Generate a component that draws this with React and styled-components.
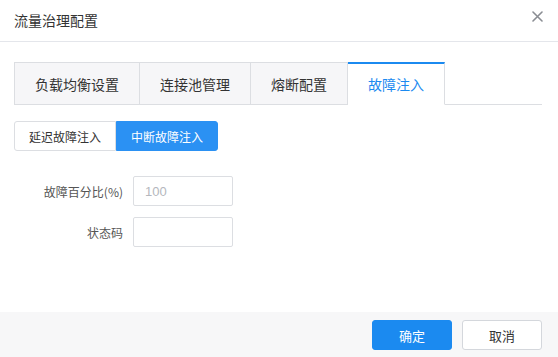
import React, { useState } from "react";
import styled, { createGlobalStyle } from "styled-components";

const GlobalStyle = createGlobalStyle`
  html, body {
    margin: 0;
    padding: 0;
    background: #fff;
  }
  body {
    font-family: "Noto Sans CJK SC", "Noto Sans", "Liberation Sans", sans-serif;
    color: #333;
  }
  * { box-sizing: border-box; }
`;

const Dialog = styled.div`
  width: 558px;
  height: 357px;
  display: flex;
  flex-direction: column;
  background: #fff;
`;

const Header = styled.div`
  height: 42px;
  display: flex;
  align-items: center;
  justify-content: space-between;
  padding: 0 14px 0 14px;
  border-bottom: 1px solid #e4e6eb;
`;

const Title = styled.div`
  font-size: 14px;
  color: #333;
  line-height: 20px;
  margin-top: -2px;
`;

const Close = styled.button`
  width: 14px;
  height: 14px;
  padding: 0;
  margin-top: -8px;
  border: none;
  background: none;
  display: flex;
  align-items: center;
  justify-content: center;
  cursor: pointer;
`;

const Body = styled.div`
  flex: 1;
  padding: 20px 16px 0 14px;
`;

const TabBar = styled.div`
  display: flex;
  border-bottom: 1px solid #dcdee2;
`;

const Tab = styled.div`
  height: 43px;
  padding: 0 20px;
  display: flex;
  align-items: center;
  font-size: 14px;
  cursor: pointer;
  margin-bottom: -1px;
  color: ${(p) => (p.$active ? "#1b8af0" : "#333")};
  background: ${(p) => (p.$active ? "#fff" : "#f6f6f8")};
  border: 1px solid #dcdee2;
  border-left: ${(p) => (p.$first ? "1px solid #dcdee2" : "none")};
  border-top: ${(p) => (p.$active ? "2px solid #1b8af0" : "1px solid #dcdee2")};
  border-bottom: ${(p) => (p.$active ? "1px solid #fff" : "1px solid #dcdee2")};
`;

const Segments = styled.div`
  display: flex;
  margin-top: 16px;
`;

const Segment = styled.button`
  height: 30px;
  width: 102px;
  padding: 0;
  font-family: inherit;
  font-size: 12px;
  cursor: pointer;
  border-radius: ${(p) => (p.$first ? "3px 0 0 3px" : "0 3px 3px 0")};
  color: ${(p) => (p.$active ? "#fff" : "#333")};
  background: ${(p) => (p.$active ? "#2b91f3" : "#fff")};
  border: 1px solid ${(p) => (p.$active ? "#2b91f3" : "#dcdee2")};
`;

const Form = styled.div`
  margin-top: 25px;
  display: flex;
  flex-direction: column;
  gap: 11px;
`;

const Row = styled.div`
  display: flex;
  align-items: center;
`;

const Label = styled.label`
  width: 119px;
  padding-right: 10px;
  text-align: right;
  font-size: 12px;
  color: #555;
`;

const Input = styled.input`
  width: 100px;
  height: 30px;
  padding: 0 11px;
  font-family: "Liberation Sans", "Noto Sans CJK SC", sans-serif;
  font-size: 13px;
  color: #333;
  border: 1px solid #dcdee2;
  border-radius: 2px;
  outline: none;
  &::placeholder { color: #b4b7bd; }
`;

const Footer = styled.div`
  height: 45px;
  background: #f7f7f8;
  display: flex;
  justify-content: flex-end;
  align-items: flex-start;
  gap: 10px;
  padding: 8px 16px 0 0;
`;

const FooterButton = styled.button`
  width: 80px;
  height: 30px;
  font-family: inherit;
  font-size: 13px;
  border-radius: 3px;
  cursor: pointer;
  color: ${(p) => (p.$primary ? "#fff" : "#333")};
  background: ${(p) => (p.$primary ? "#1b8af0" : "#fff")};
  border: 1px solid ${(p) => (p.$primary ? "#1b8af0" : "#d4d7dc")};
`;

const tabs = ["负载均衡设置", "连接池管理", "熔断配置", "故障注入"];
const modes = ["延迟故障注入", "中断故障注入"];

export default function App() {
  const [tab, setTab] = useState(3);
  const [mode, setMode] = useState(1);

  return (
    <>
      <GlobalStyle />
      <Dialog>
        <Header>
          <Title>流量治理配置</Title>
          <Close aria-label="关闭">
            <svg width="11" height="11" viewBox="0 0 11 11">
              <path d="M1 1L10 10M10 1L1 10" stroke="#8a8d93" strokeWidth="1.6" strokeLinecap="round" />
            </svg>
          </Close>
        </Header>
        <Body>
          <TabBar>
            {tabs.map((t, i) => (
              <Tab key={t} $first={i === 0} $active={i === tab} onClick={() => setTab(i)}>
                {t}
              </Tab>
            ))}
          </TabBar>
          <Segments>
            {modes.map((m, i) => (
              <Segment key={m} $first={i === 0} $active={i === mode} onClick={() => setMode(i)}>
                {m}
              </Segment>
            ))}
          </Segments>
          <Form>
            <Row>
              <Label>故障百分比(%)</Label>
              <Input placeholder="100" />
            </Row>
            <Row>
              <Label>状态码</Label>
              <Input />
            </Row>
          </Form>
        </Body>
        <Footer>
          <FooterButton $primary>确定</FooterButton>
          <FooterButton>取消</FooterButton>
        </Footer>
      </Dialog>
    </>
  );
}
